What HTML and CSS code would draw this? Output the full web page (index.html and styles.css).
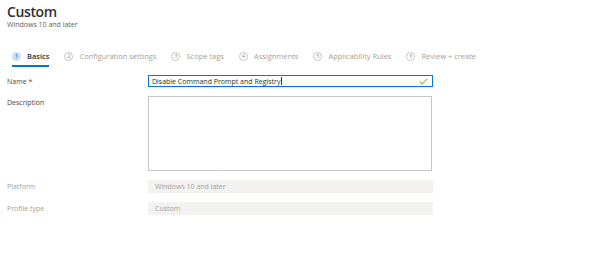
FILE: index.html
```html
<!DOCTYPE html>
<html lang="en">
<head>
  <meta charset="UTF-8">
  <title>Custom - Windows 10 and later</title>
<link rel="stylesheet" href="styles.css">
</head>
<body>

  <!-- Header -->
  <header class="blade-header">
    <h1>Custom</h1>
    <div class="subtitle">Windows 10 and later</div>
  </header>

  <!-- Wizard steps -->
  <nav class="steps">
    <div class="step active"><span class="num">1</span><span class="label">Basics</span></div>
    <div class="step"><span class="num">2</span><span class="label">Configuration settings</span></div>
    <div class="step"><span class="num">3</span><span class="label">Scope tags</span></div>
    <div class="step"><span class="num">4</span><span class="label">Assignments</span></div>
    <div class="step"><span class="num">5</span><span class="label">Applicability Rules</span></div>
    <div class="step"><span class="num">6</span><span class="label">Review + create</span></div>
  </nav>

  <!-- Form -->
  <div class="form">
    <div class="row">
      <label class="field-label">Name <span class="req">*</span></label>
      <div class="text-box focused">
        <span class="value">Disable Command Prompt and Registry</span><span class="caret"></span>
        <svg class="check" width="9" height="7" viewBox="0 0 9 7">
          <path d="M0.7 3.6 L3.2 6 L8.3 0.8" fill="none" stroke="#8cc152" stroke-width="1.1"/>
        </svg>
      </div>
    </div>

    <div class="row row-top">
      <label class="field-label">Description</label>
      <div class="text-area"></div>
    </div>

    <div class="row disabled">
      <label class="field-label">Platform</label>
      <div class="text-box readonly">Windows 10 and later</div>
    </div>

    <div class="row disabled">
      <label class="field-label">Profile type</label>
      <div class="text-box readonly">Custom</div>
    </div>
  </div>

</body>
</html>
```

FILE: styles.css
```css
/* Base */
body {
  font-family: 'Open Sans', 'Noto Sans', sans-serif;
  margin: 0;
  padding: 2px 7px;
  color: #323130;
  background: #fff;
}

/* Header */
.blade-header h1 {
  font-size: 14px;
  font-weight: 600;
  letter-spacing: -0.4px;
  margin: 0;
  line-height: 19px;
}

.subtitle {
  font-size: 7px;
  line-height: 8px;
  color: #605e5c;
}

/* Wizard steps */
.steps {
  display: flex;
  gap: 15px;
  margin-top: 22px;
  padding-left: 5px;
}

.step {
  display: flex;
  align-items: center;
  gap: 6px;
  padding-bottom: 4px;
  color: #a19f9d;
  font-size: 7.5px;
  line-height: 10px;
  border-bottom: 2px solid transparent;
}

.step .num {
  width: 7px;
  height: 7px;
  border: 1px solid #c8c6c4;
  border-radius: 50%;
  font-size: 5px;
  line-height: 7px;
  display: flex;
  align-items: center;
  justify-content: center;
  color: #8a8886;
}

.step.active {
  color: #323130;
  font-weight: 600;
  border-bottom-color: #0078d4;
}

.step.active .num {
  background: #c7e0f4;
  border-color: #c7e0f4;
  color: #0078d4;
}

/* Form */
.form {
  margin-top: 8px;
  display: flex;
  flex-direction: column;
  gap: 9px;
}

.row {
  display: flex;
  align-items: center;
}

.row-top {
  align-items: flex-start;
}

.field-label {
  width: 141px;
  font-size: 7px;
  color: #4a4846;
}

.row-top .field-label {
  padding-top: 2px;
}

.req {
  color: #a4262c;
}

.text-box {
  width: 277px;
  height: 10px;
  padding: 0 3px;
  font-size: 7px;
  display: flex;
  align-items: center;
  border: 1px solid transparent;
}

.text-box.focused {
  border-color: #0078d4;
}

.caret {
  width: 1px;
  height: 8px;
  background: #323130;
  margin-left: 1px;
}

.check {
  margin-left: auto;
  margin-right: 1px;
}

.text-area {
  width: 282px;
  height: 73px;
  border: 1px solid #c8c6c4;
}

.disabled .field-label {
  color: #a19f9d;
}

.text-box.readonly {
  background: #f3f2f1;
  color: #a19f9d;
  height: 11px;
  padding: 0 6px;
  width: 271px;
}
```
